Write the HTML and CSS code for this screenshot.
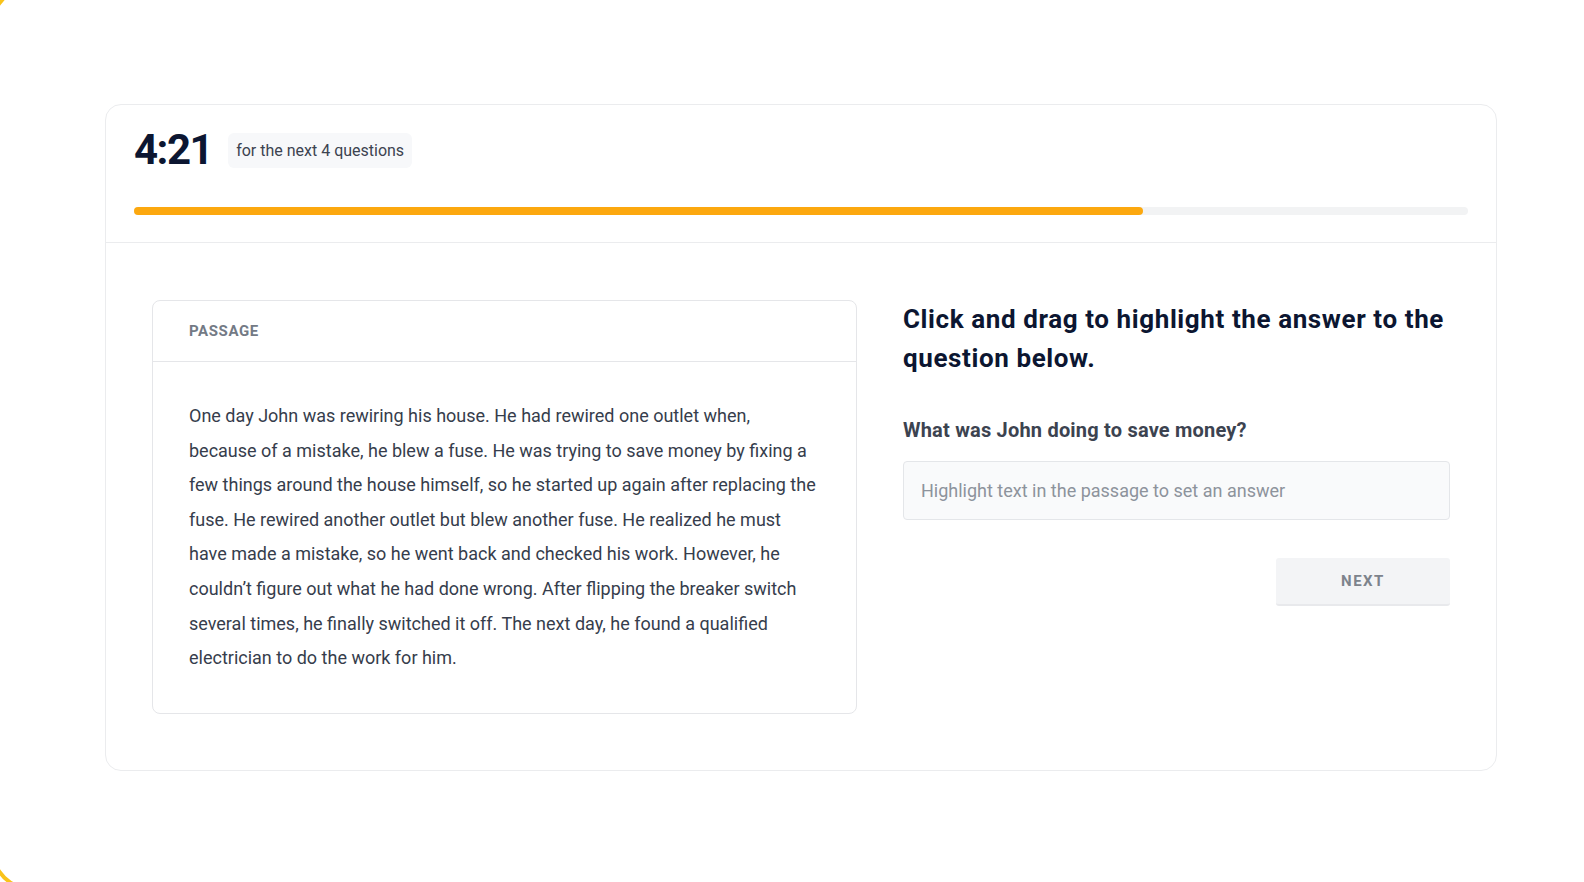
FILE: index.html
```html
<!DOCTYPE html>
<html lang="en">
<head>
    <meta charset="UTF-8">
    <meta name="viewport" content="width=device-width, initial-scale=1.0">
    <title>Reading Assessment</title>
    <link rel="stylesheet" href="styles.css">
</head>
<body>
<div class="frame"></div>

<div class="page">
    <div class="card">
        <div class="card-head">
            <div class="timer-row">
                <span class="timer">4:21</span>
                <span class="timer-note">for the next 4 questions</span>
            </div>
            <div class="progress">
                <div class="progress-fill" style="width: 75.6%"></div>
            </div>
        </div>

        <div class="card-body">
            <div class="passage">
                <div class="passage-head">PASSAGE</div>
                <p class="passage-text">
                    One day John was rewiring his house. He had rewired one outlet when,<br>
                    because of a mistake, he blew a fuse. He was trying to save money by fixing a<br>
                    few things around the house himself, so he started up again after replacing the<br>
                    fuse. He rewired another outlet but blew another fuse. He realized he must<br>
                    have made a mistake, so he went back and checked his work. However, he<br>
                    couldn’t figure out what he had done wrong. After flipping the breaker switch<br>
                    several times, he finally switched it off. The next day, he found a qualified<br>
                    electrician to do the work for him.
                </p>
            </div>

            <div class="question">
                <h2>Click and drag to highlight the answer to the question below.</h2>
                <div class="answer-form">
                    <label class="question-label">What was John doing to save money?</label>
                    <div class="answer-box">Highlight text in the passage to set an answer</div>
                    <div class="actions">
                        <button class="next-btn">NEXT</button>
                    </div>
                </div>
            </div>
        </div>
    </div>
</div>
</body>
</html>
```

FILE: styles.css
```css
body {
    margin: 0;
    background: #fff;
    font-family: Roboto, 'Liberation Sans', sans-serif;
    color: #363d4c;
    overflow: hidden;
}
.frame {
    position: fixed;
    top: -17px;
    left: -10px;
    bottom: -10px;
    width: 2400px;
    border: 4px solid #f9c31a;
    border-radius: 44px;
    pointer-events: none;
}
.page {
    padding: 104px 0 0 105px;
}
.card {
    width: 1390px;
    border: 1px solid #ebecee;
    border-radius: 16px;
}
.card-head {
    padding: 24px 28px 27px;
    border-bottom: 1px solid #ebecee;
}
.timer-row {
    display: flex;
    align-items: center;
    gap: 16px;
    height: 42px;
}
.timer {
    font-size: 42px;
    font-weight: 700;
    letter-spacing: -1.5px;
    color: #0c1631;
    line-height: 1;
}
.timer-note {
    background: #f7f8fa;
    border-radius: 6px;
    padding: 0 8px;
    height: 35px;
    line-height: 35px;
    font-size: 16px;
    color: #3c4350;
}
.progress {
    margin-top: 36px;
    height: 8px;
    background: #f2f3f4;
    border-radius: 4px;
}
.progress-fill {
    height: 100%;
    background: #fca80f;
    border-radius: 4px;
}
.card-body {
    display: grid;
    grid-template-columns: 705px 1fr;
    gap: 46px;
    padding: 57px 46px 56px;
}
.passage {
    border: 1px solid #e5e6e9;
    border-radius: 8px;
}
.passage-head {
    height: 60px;
    display: flex;
    align-items: center;
    padding: 0 36px;
    border-bottom: 1px solid #e5e6e9;
    font-size: 15px;
    font-weight: 700;
    letter-spacing: 0.6px;
    color: #737a85;
}
.passage-text {
    margin: 0;
    padding: 37px 36px 37px;
    font-size: 18px;
    line-height: 34.6px;
    white-space: nowrap;
}
.question h2 {
    margin: 0;
    font-size: 26px;
    line-height: 39px;
    font-weight: 700;
    letter-spacing: 0.6px;
    color: #0c1631;
}
.question-label {
    display: block;
    margin-top: 39px;
    font-size: 20px;
    font-weight: 700;
    line-height: 26px;
    letter-spacing: 0.2px;
    color: #3c4350;
}
.answer-box {
    margin-top: 18px;
    height: 57px;
    line-height: 57px;
    padding: 0 17px;
    background: #f9fafb;
    border: 1px solid #e4e6e9;
    border-radius: 4px;
    font-size: 18px;
    color: #8d939c;
}
.actions {
    display: flex;
    justify-content: flex-end;
    margin-top: 38px;
}
.next-btn {
    width: 174px;
    height: 48px;
    border: none;
    border-bottom: 2px solid #e8e9ec;
    border-radius: 3px;
    background: #f3f4f6;
    font-family: inherit;
    font-size: 15px;
    font-weight: 700;
    letter-spacing: 1.5px;
    color: #7d838c;
}
```
